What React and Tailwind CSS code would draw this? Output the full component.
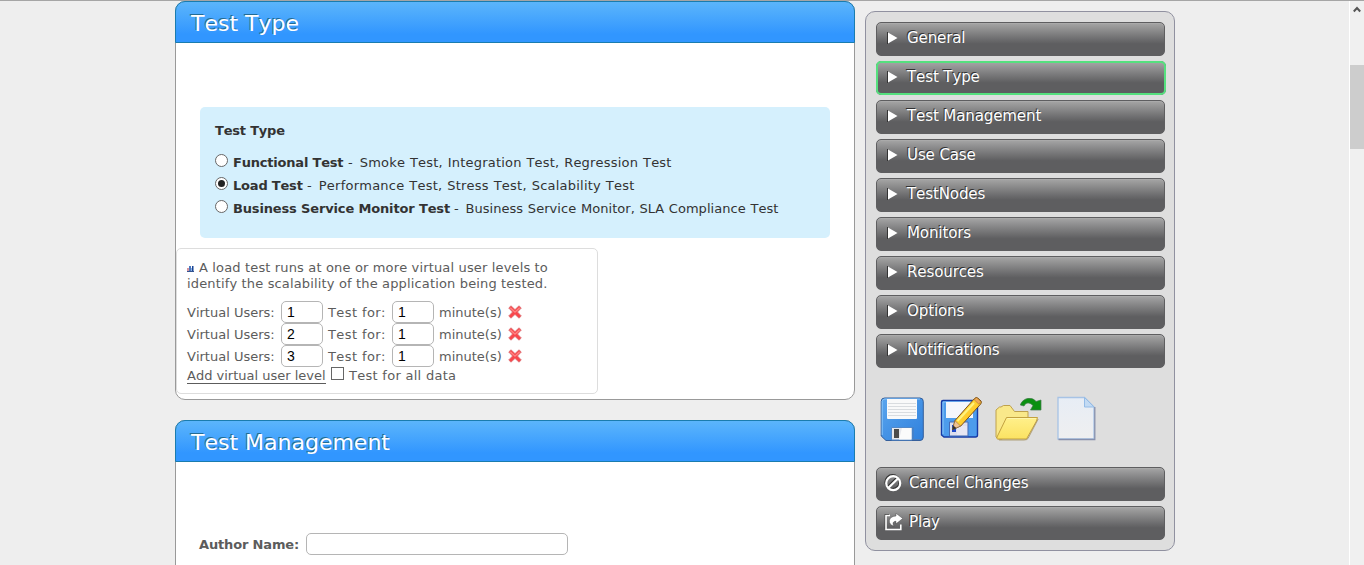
import React from "react";

function Panel({ title, className, children }) {
  return (
    <section className={`w-[680px] rounded-[10px] border border-[#999] bg-white ${className}`}>
      <h2 className="-mx-px -mt-px h-[42px] rounded-t-[10px] border border-[#1a7cae] bg-linear-to-b from-[#5bb5fb] to-[#3196ff] to-80% pl-[15px] text-[22px] leading-[43px] text-white [text-shadow:-1px_-1px_0_#226b94]">
        {title}
      </h2>
      {children}
    </section>
  );
}

function Radio({ checked }) {
  return (
    <span className="mr-[5px] flex size-[13px] shrink-0 items-center justify-center rounded-full border border-[#666] bg-white">
      {checked && <span className="size-[7px] rounded-full bg-[#222]" />}
    </span>
  );
}

function TestOption({ name, detail, checked, nameClass, detailClass }) {
  return (
    <div className="flex h-[23px] items-start whitespace-nowrap text-[13px] leading-[17px] text-[#333]">
      <Radio checked={checked} />
      <span className={`shrink-0 font-bold ${nameClass}`}>{name}</span>
      <span className={`[word-spacing:0.5px] ${detailClass}`}><span className="mr-[2px]">-</span> {detail}</span>
    </div>
  );
}

function DeleteIcon() {
  return (
    <svg width="14" height="14" viewBox="0 0 14 14" className="ml-[4px] shrink-0">
      <path d="M3 .8 L7 4.600 L11 .8 L13.300 3 L9.500 7 L13.300 11 L11 13.200 L7 9.400 L3 13.200 L.7 11 L4.500 7 L.7 3 Z" fill="#f9474c" stroke="#d9777b" strokeWidth=".8" strokeLinejoin="round" />
      <path d="M2.300 2.800 L7 7.200 L11.700 2.800" fill="none" stroke="#ff8583" strokeWidth="1.300" />
    </svg>
  );
}

function LevelInput({ value }) {
  return (
    <span className="h-[22px] w-[42px] shrink-0 rounded-[5px] border border-[#b5b5b5] bg-white pl-[5px] font-['Liberation_Sans'] text-[14px] leading-[21px] text-black">
      {value}
    </span>
  );
}

function LevelRow({ users }) {
  return (
    <div className="flex h-[22px] items-center whitespace-nowrap">
      <span className="w-[94px] pt-px">Virtual Users:</span>
      <LevelInput value={users} />
      <span className="w-[69px] pt-px pl-[5px] tracking-[0.4px]">Test for:</span>
      <LevelInput value="1" />
      <span className="w-[70px] pt-px pl-[5px]">minute(s)</span>
      <DeleteIcon />
    </div>
  );
}

function Arrow() {
  return (
    <svg width="13" height="14" viewBox="0 0 13 14" className="mr-[7px] ml-[10px] mb-[3px] shrink-0">
      <path d="M0.5 1 L0.5 13" stroke="#333" />
      <path d="M1 1.5 L10.500 7 L1 12.500Z" fill="#fff" />
    </svg>
  );
}

function CancelIcon() {
  return (
    <svg width="18" height="18" viewBox="0 0 18 18" className="mr-[7px] ml-[7px] mb-[3px] shrink-0" fill="none">
      <g stroke="#333" strokeWidth="2.2"><circle cx="8.5" cy="8.2" r="7" /><path d="M4.3 12.2 L12.7 4" /></g>
      <g stroke="#fff" strokeWidth="2.2"><circle cx="9.2" cy="9.2" r="7" /><path d="M4.5 13.8 L13.9 4.5" /></g>
    </svg>
  );
}

function ShareIcon() {
  return (
    <svg width="20" height="18" viewBox="0 0 20 18" className="mr-[5px] ml-[7px] mb-[3px] shrink-0" fill="none">
      <path d="M5 1.500 H1.300 V16" stroke="#333" strokeWidth="1.2" />
      <path d="M6 2.500 H2 V16.500 H16.800 V11.500" stroke="#fff" strokeWidth="1.600" />
      <path d="M12 .3 L18.800 5.500 L12 10.800 V8.300 C9 8.200 8.200 10.500 10 13.200 C3.500 11.800 3.500 3.200 12 3Z" fill="#fff" stroke="#333" strokeWidth=".4" />
    </svg>
  );
}

function SideButton({ label, icon, active }) {
  return (
    <div className={`flex h-[34px] items-center whitespace-nowrap rounded-[5px] border border-[#5e5e60] bg-linear-to-b from-[#a6a6a6] to-[#5e5e60] to-65% text-[15px] leading-[18px] text-white [text-shadow:-1px_-1px_0_#333] ${active ? "w-[290px] outline-2 -outline-offset-2 outline-[#55e07e]" : "w-[289px] shadow-[inset_0_1px_0_#aaa]"}`}>
      {icon}
      <span className="pb-[3px] tracking-[-0.1px]">{label}</span>
    </div>
  );
}

function DiskIcon() {
  return (
    <svg width="44" height="46" viewBox="0 0 44 46" className="shrink-0">
      <defs>
        <linearGradient id="disk" x1="0" y1="0" x2="1" y2="1"><stop stopColor="#5aa5ee" /><stop offset="1" stopColor="#2f80dd" /></linearGradient>
      </defs>
      <path d="M4.500 2 H40 Q43.300 2 43.300 5.500 V41 Q43.300 44.500 40 44.500 H6 L1.2 40 V5.500 Q1.2 2 4.500 2Z" fill="url(#disk)" stroke="#355f9b" strokeWidth="1" />
      <path d="M2.2 39 V5.500 Q2.2 3 5 3 H40" fill="none" stroke="#86c4fb" />
      <path d="M7 3 H37 V22 Q37 23 36 23 H8 Q7 23 7 22Z" fill="#f9f9fa" />
      <path d="M8 7.500 H36 M8 10.500 H36 M8 13.500 H36 M8 16.500 H36 M8 19.500 H36" stroke="#d9dce0" />
      <path d="M11.500 44 V31.500 H32 V44Z" fill="#e7e8ed" stroke="#5288c8" />
      <path d="M22 32 H31.500 V43.500 H19Z" fill="#fbfbfb" />
      <rect x="14" y="33" width="5" height="9" fill="#4c4c4c" />
      <path d="M33 31 V43.500 H40" stroke="#4d7db9" fill="none" />
    </svg>
  );
}

function EditDiskIcon() {
  return (
    <svg width="42" height="44" viewBox="0 0 42 44" className="shrink-0">
      <defs>
        <linearGradient id="pencil" x1="0" y1="0" x2="1" y2="1"><stop stopColor="#ffe94d" /><stop offset="1" stopColor="#ffb515" /></linearGradient>
      </defs>
      <path d="M3 4.500 H36 Q37.500 4.500 37.500 6 V39 Q37.500 41 35.500 41 H4 L1.500 39 V6 Q1.500 4.500 3 4.500Z" fill="#4d9cec" stroke="#163aa5" strokeWidth="1.4" />
      <path d="M3 38 V6 H35" fill="none" stroke="#8cc5fa" />
      <path d="M6 6 H33 V22 H6Z" fill="#f4f6fc" />
      <path d="M9.500 26 H28 V40 H9.500Z" fill="#dcdeed" stroke="#456bb5" />
      <path d="M12 29 H16 V36 H12Z" fill="#1f49ca" />
      <path d="M17 30 H27 V39 H17Z" fill="#e6e6f2" />
      <path d="M12.500 33.500 L15 24.500 L34.500 2.500 Q36 .8 37.800 2 L41 5 Q42 6.500 40.700 8 L20.800 30 Z" fill="url(#pencil)" stroke="#7d501b" strokeWidth="1" />
      <path d="M34.200 3.800 L36.500 1.700 L40.800 5.700 L38.900 8.200Z" fill="#f0a957" stroke="#9c6430" strokeWidth=".5" />
      <path d="M17.500 25 L34 7" stroke="#fff27f" strokeWidth="2" />
      <path d="M12.500 33.500 L15 24.700 L20.500 30Z" fill="#f0c293" stroke="#80603c" strokeWidth=".5" />
      <path d="M12.200 34 L13.300 29.500 L16.500 32.300Z" fill="#333" />
    </svg>
  );
}

function FolderIcon() {
  return (
    <svg width="47" height="44" viewBox="0 0 47 44" className="shrink-0">
      <defs>
        <linearGradient id="folder" x1="0" y1="0" x2="0" y2="1"><stop stopColor="#fff08b" /><stop offset="1" stopColor="#fbe262" /></linearGradient>
      </defs>
      <path d="M1 39 V12 L4.500 9 H6 L8.500 7.500 H15 L19.500 13.500 H33 V21 H30 L7 41 H3Z" fill="#f9e88a" stroke="#bfa14c" />
      <path d="M11.500 19.500 H42.500 L41.500 23 L31.500 41 H2.500 Q1.500 41 2 39Z" fill="url(#folder)" stroke="#c3a140" />
      <path d="M12.500 20.500 H41" stroke="#fff6ac" />
      <path d="M43.200 21 L33 40.500 Q32 42 29 42 H4" fill="none" stroke="#9c8751" strokeWidth=".7" />
      <path d="M25.300 7 C28 -.8 37.500 -1.500 41 3.500 L46 2 V12 H35.500 L38 7.500 C34.500 4 31 4 29 8Z" fill="#0b9010" stroke="#44794d" strokeWidth=".7" />
    </svg>
  );
}

function PageIcon() {
  return (
    <svg width="39" height="45" viewBox="0 0 39 45" className="shrink-0">
      <defs>
        <linearGradient id="sheet" x1="0" y1="0" x2="0" y2="1"><stop stopColor="#e7edf5" /><stop offset="1" stopColor="#efeff0" /></linearGradient>
      </defs>
      <path d="M1 1.500 H27.500 L37 11 V43 H1Z" fill="url(#sheet)" stroke="#a7c3e5" strokeWidth="1.300" />
      <path d="M37.800 11 V43.500 H1.500" fill="none" stroke="#8790ad" strokeWidth="1.300" />
      <path d="M27.500 1.500 V11 H37Z" fill="#c2daf3" stroke="#94bce7" />
    </svg>
  );
}

export default function App() {
  const sections = ["General", "Test Type", "Test Management", "Use Case", "TestNodes", "Monitors", "Resources", "Options", "Notifications"];
  return (
    <div className="flex h-[565px] w-full overflow-hidden border-t border-[#a5a5a5] bg-[#eee] font-['DejaVu_Sans',sans-serif] text-[#5c5c5c] [font-kerning:none]">
      <main className="ml-[175px] w-[680px] shrink-0">
        <Panel title="Test Type" className="h-[399px]">
          <div className="mt-[64px] ml-[24px] h-[131px] w-[630px] rounded-[5px] bg-[#d5f0fd] pt-[14px] pl-[15px]">
            <h3 className="mb-[14px] h-[19px] text-[13px] leading-[19px] font-bold tracking-[-0.2px] text-[#333]">Test Type</h3>
            <TestOption name="Functional Test" detail="Smoke Test, Integration Test, Regression Test" nameClass="w-[115px] tracking-[-0.2px]" detailClass="tracking-[0.2px]" />
            <TestOption checked name="Load Test" detail="Performance Test, Stress Test, Scalability Test" nameClass="w-[74px] tracking-[-0.2px]" detailClass="tracking-[0.23px]" />
            <TestOption name="Business Service Monitor Test" detail="Business Service Monitor, SLA Compliance Test" nameClass="w-[221px] tracking-[-0.15px]" detailClass="tracking-[0.05px]" />
          </div>
          <div className="mt-[10px] h-[146px] w-[422px] rounded-[5px] border border-[#ddd] pt-[11px] pl-[10px] text-[13px] leading-[16px]">
            <p className="mb-[9px] whitespace-nowrap tracking-[0.15px]">
              <svg width="8" height="8" viewBox="0 0 8 8" className="mr-[4px] inline-block align-[-1px]">
                <path d="M0 3 H2 V7 H0Z" fill="#d5949f" />
                <path d="M2 1 H4 V7 H2Z" fill="#4a77be" />
                <path d="M4 3 H5 V7 H4Z" fill="#8db1e2" />
                <path d="M5 1 H6.500 V7 H5Z" fill="#174394" />
                <path d="M0 6 H7 V7 H0Z" fill="#345490" />
              </svg>
              A load test runs at one or more virtual user levels to<br />
              identify the scalability of the application being tested.
            </p>
            <LevelRow users="1" />
            <LevelRow users="2" />
            <LevelRow users="3" />
            <div className="flex h-[17px] items-center whitespace-nowrap">
              <span className="w-[144px]"><span className="border-b border-[#5c5c5c] leading-[14px]">Add virtual user level</span></span>
              <span className="mb-[4px] size-[13px] border border-[#666] bg-white" />
              <span className="pl-[5px] tracking-[0.28px]">Test for all data</span>
            </div>
          </div>
        </Panel>
        <Panel title="Test Management" className="mt-[20px] h-[300px]">
          <div className="mt-[71px] ml-[23px] flex items-center">
            <span className="w-[107px] pt-px text-[13px] font-bold tracking-[-0.15px] whitespace-nowrap">Author Name:</span>
            <span className="h-[22px] w-[262px] rounded-[5px] border border-[#b5b5b5] bg-white" />
          </div>
        </Panel>
      </main>
      <aside className="mt-[10px] ml-[10px] h-[540px] w-[310px] shrink-0 rounded-[10px] border border-[#9091a0] bg-[#dedede] pt-[10px] pl-[10px]">
        <nav className="flex flex-col gap-[5px]">
          {sections.map((s) => <SideButton key={s} label={s} icon={<Arrow />} active={s === "Test Type"} />)}
        </nav>
        <div className="mt-[28px] flex h-[46px] items-start pl-[4px]">
          <DiskIcon />
          <span className="ml-[16px]"><EditDiskIcon /></span>
          <span className="ml-[13px] pt-[2px]"><FolderIcon /></span>
          <span className="ml-[15px]"><PageIcon /></span>
        </div>
        <div className="mt-[25px] flex flex-col gap-[5px]">
          <SideButton label="Cancel Changes" icon={<CancelIcon />} />
          <SideButton label="Play" icon={<ShareIcon />} />
        </div>
      </aside>
      <div className="ml-auto flex w-[15px] shrink-0 flex-col items-center border-l border-white bg-[#f0f0f0]">
        <svg width="8" height="7" viewBox="0 0 8 7" className="mt-[5px]"><path d="M.8 5.500 L4 2 L7.200 5.500" fill="none" stroke="#555" strokeWidth="2" /></svg>
        <span className="mt-[52px] h-[84px] w-full bg-[#cdcdcd]" />
      </div>
    </div>
  );
}
